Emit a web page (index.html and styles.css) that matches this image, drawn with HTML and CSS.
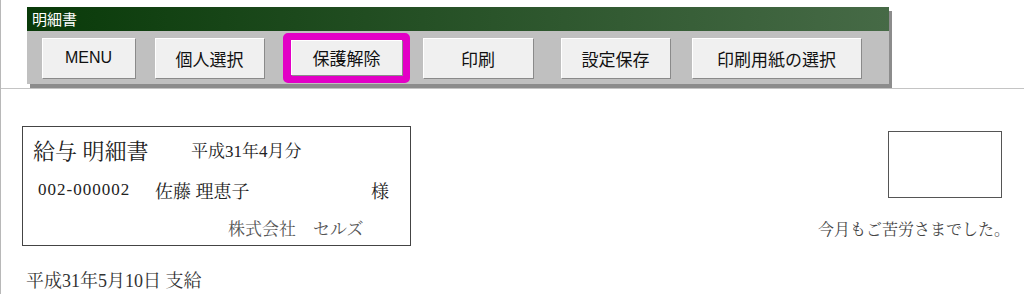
FILE: index.html
```html
<!DOCTYPE html>
<html lang="ja">
<head>
    <meta charset="UTF-8">
    <title>明細書</title>
    <link rel="stylesheet" href="styles.css">
</head>
<body>
    <div class="page">
        <div class="header">
            <div class="toolbar">
                <div class="toolbar-title">明細書</div>
                <div class="toolbar-buttons">
                    <button class="btn btn-menu">MENU</button>
                    <button class="btn btn-person">個人選択</button>
                    <div class="highlight">
                        <button class="btn btn-unlock">保護解除</button>
                    </div>
                    <button class="btn btn-print">印刷</button>
                    <button class="btn btn-save">設定保存</button>
                    <button class="btn btn-paper">印刷用紙の選択</button>
                </div>
            </div>
        </div>

        <div class="sheet">
            <div class="sheet-left">
                <div class="slip">
                    <div class="slip-row slip-head">
                        <span class="slip-title">給与 明細書</span>
                        <span class="slip-month">平成31年4月分</span>
                    </div>
                    <div class="slip-row slip-name">
                        <span class="emp-code">002-000002</span>
                        <span class="emp-name">佐藤 理恵子</span>
                        <span class="emp-sama">様</span>
                    </div>
                    <div class="slip-row slip-company">株式会社　セルズ</div>
                </div>
                <div class="pay-date">平成31年5月10日 支給</div>
            </div>
            <div class="sheet-right">
                <div class="stamp-box"></div>
                <div class="thanks">今月もご苦労さまでした。</div>
            </div>
        </div>
    </div>
</body>
</html>
```

FILE: styles.css
```css
body {
    margin: 0;
    padding: 0;
    background: #ffffff;
    font-family: "Noto Sans CJK JP", sans-serif;
    color: #222;
}
.page {
    height: 294px;
    border-left: 1px solid #b8b8b8;
    overflow: hidden;
}
.header {
    height: 89px;
    border-bottom: 1px solid #c4c4c4;
    box-sizing: border-box;
    padding-top: 7px;
}
.toolbar {
    margin-left: 26px;
    width: 862px;
    background: #c0c0c0;
    box-shadow: 3px 4px 0 #8c8c8c;
}
.toolbar-title {
    height: 24px;
    line-height: 24px;
    padding-left: 5px;
    color: #ffffff;
    font-size: 15px;
    background: linear-gradient(90deg, #093a09, #466a46);
}
.toolbar-buttons {
    height: 53px;
    display: flex;
    align-items: center;
    padding-left: 15px;
}
.btn {
    height: 40px;
    padding: 0;
    margin-top: 1px;
    border: none;
    background: #f0f0f0;
    box-shadow: 1px 1px 0 #8a8a8a, inset 1px 1px 0 #ffffff;
    font-family: "Noto Sans CJK JP", sans-serif;
    font-size: 17px;
    color: #111;
}
.btn-menu {
    width: 93px;
    font-family: "Liberation Sans", Arial, sans-serif;
    font-size: 16px;
}
.btn-person {
    width: 109px;
    margin-left: 20px;
}
.highlight {
    margin-left: 19px;
    border: 8px solid #e300c6;
    border-top-width: 7px;
    border-radius: 5px;
    display: flex;
}
.btn-unlock {
    width: 111px;
    height: 35px;
    margin-top: 0;
}
.btn-print {
    width: 110px;
    margin-left: 13px;
}
.btn-save {
    width: 109px;
    margin-left: 28px;
}
.btn-paper {
    width: 169px;
    margin-left: 22px;
}

.sheet {
    display: flex;
    justify-content: space-between;
    padding-top: 37px;
}
.sheet-left {
    padding-left: 21px;
}
.slip {
    width: 387px;
    height: 118px;
    border: 1px solid #444;
    font-family: "Liberation Serif", "Noto Serif CJK JP", "Noto Sans CJK JP", serif;
    color: #222;
}
.slip-row {
    display: flex;
    align-items: center;
}
.slip-head {
    height: 44px;
    padding-left: 10px;
}
.slip-title {
    font-size: 22px;
    width: 158px;
}
.slip-month {
    font-size: 17px;
}
.slip-name {
    height: 38px;
    padding-left: 15px;
    font-size: 17px;
}
.emp-code {
    width: 117px;
    font-size: 17px;
    letter-spacing: 1px;
}
.emp-name {
    width: 216px;
    font-size: 18px;
}
.emp-sama {
    font-size: 18px;
}
.slip-company {
    height: 36px;
    padding-left: 205px;
    font-size: 17px;
    color: #555;
}
.pay-date {
    margin-top: 20px;
    margin-left: 4px;
    font-family: "Liberation Serif", "Noto Serif CJK JP", "Noto Sans CJK JP", serif;
    font-size: 18px;
    color: #333;
}
.sheet-right {
    display: flex;
    flex-direction: column;
    align-items: flex-end;
    padding-right: 14px;
    padding-top: 5px;
}
.stamp-box {
    width: 112px;
    height: 65px;
    margin-right: 8px;
    border: 1px solid #555;
}
.thanks {
    margin-top: 19px;
    font-family: "Liberation Serif", "Noto Serif CJK JP", "Noto Sans CJK JP", serif;
    font-size: 16px;
    color: #444;
}
```
